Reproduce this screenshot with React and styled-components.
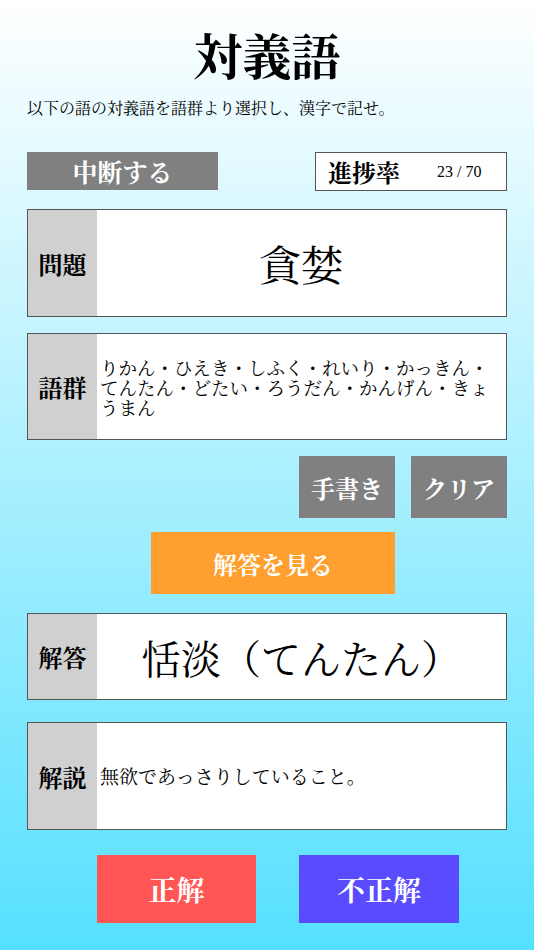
import React from "react";
import styled, { createGlobalStyle } from "styled-components";

const FONT = `"Noto Serif CJK JP", "Noto Sans CJK JP", "Liberation Serif", serif`;

const GlobalStyle = createGlobalStyle`
  html, body {
    margin: 0;
    padding: 0;
  }
  body {
    font-family: ${FONT};
    color: #000;
  }
  * {
    box-sizing: border-box;
  }
`;

const Page = styled.div`
  min-height: 950px;
  background: linear-gradient(to bottom, #ffffff 0%, #55e0ff 100%);
  display: flex;
  flex-direction: column;
`;

const Title = styled.h1`
  margin: 22px 0 0;
  font-size: 49px;
  line-height: 64px;
  font-weight: 700;
  text-align: center;
`;

const Lead = styled.p`
  margin: 10px 0 0;
  padding-left: 27px;
  font-size: 16px;
  line-height: 24px;
`;

const Inner = styled.div`
  margin: ${(p) => p.top || 0}px 27px 0 27px;
  display: flex;
  flex-direction: column;
`;

const TopRow = styled.div`
  display: flex;
  justify-content: space-between;
  align-items: stretch;
  height: 39px;
`;

const GrayButton = styled.button`
  border: none;
  border-radius: 0;
  padding: 0;
  background: #808080;
  color: #fff;
  font-family: ${FONT};
  font-weight: 700;
  font-size: ${(p) => p.size || 24}px;
  width: ${(p) => p.w}px;
  height: ${(p) => p.h}px;
  display: flex;
  align-items: center;
  justify-content: center;
`;

const Progress = styled.div`
  width: 192px;
  background: #fff;
  border: 1px solid #555;
  display: flex;
  align-items: center;
  padding-left: 12px;
  gap: 37px;
`;

const ProgressLabel = styled.span`
  font-size: 24px;
  font-weight: 700;
`;

const ProgressCount = styled.span`
  font-family: "Liberation Serif", serif;
  font-size: 16px;
`;

const Box = styled.div`
  margin-top: ${(p) => p.gap}px;
  height: ${(p) => p.h}px;
  display: flex;
  background: #fff;
  border: 1px solid #555;
`;

const BoxLabel = styled.div`
  width: 69px;
  flex-shrink: 0;
  background: #d0d0d0;
  display: flex;
  align-items: center;
  justify-content: center;
  font-size: 24px;
  font-weight: 700;
`;

const BoxBody = styled.div`
  flex: 1;
  display: flex;
  align-items: center;
  justify-content: ${(p) => (p.center ? "center" : "flex-start")};
  padding: 0 4px 0 3px;
  font-size: ${(p) => p.size}px;
  line-height: ${(p) => p.lh || 1.2};
`;

const ToolRow = styled.div`
  margin-top: 16px;
  display: flex;
  justify-content: flex-end;
  gap: 16px;
`;

const ShowRow = styled.div`
  margin-top: 14px;
  padding-left: 124px;
  display: flex;
`;

const ShowButton = styled(GrayButton)`
  background: #ff9f30;
`;

const JudgeRow = styled.div`
  margin-top: 25px;
  padding-left: 70px;
  display: flex;
  gap: 43px;
`;

const JudgeButton = styled(GrayButton)`
  background: ${(p) => p.color};
`;

export default function App() {
  return (
    <>
      <GlobalStyle />
      <Page>
        <Title>対義語</Title>
        <Lead>以下の語の対義語を語群より選択し、漢字で記せ。</Lead>

        <Inner top={32}>
          <TopRow>
            <GrayButton w={191} h={38} size={25}>中断する</GrayButton>
            <Progress>
              <ProgressLabel>進捗率</ProgressLabel>
              <ProgressCount>23 / 70</ProgressCount>
            </Progress>
          </TopRow>

          <Box gap={18} h={108}>
            <BoxLabel>問題</BoxLabel>
            <BoxBody center size={42}>貪婪</BoxBody>
          </Box>

          <Box gap={16} h={107}>
            <BoxLabel>語群</BoxLabel>
            <BoxBody size={18.5} lh="20px">
              りかん・ひえき・しふく・れいり・かっきん・てんたん・どたい・ろうだん・かんげん・きょうまん
            </BoxBody>
          </Box>

          <ToolRow>
            <GrayButton w={96} h={62}>手書き</GrayButton>
            <GrayButton w={96} h={62}>クリア</GrayButton>
          </ToolRow>

          <ShowRow>
            <ShowButton w={244} h={62}>解答を見る</ShowButton>
          </ShowRow>

          <Box gap={19} h={87}>
            <BoxLabel>解答</BoxLabel>
            <BoxBody center size={40}>恬淡（てんたん）</BoxBody>
          </Box>

          <Box gap={22} h={108}>
            <BoxLabel>解説</BoxLabel>
            <BoxBody size={19}>無欲であっさりしていること。</BoxBody>
          </Box>

          <JudgeRow>
            <JudgeButton color="#ff5555" w={159} h={68} size={28}>正解</JudgeButton>
            <JudgeButton color="#5a4bff" w={160} h={68} size={28}>不正解</JudgeButton>
          </JudgeRow>
        </Inner>
      </Page>
    </>
  );
}
